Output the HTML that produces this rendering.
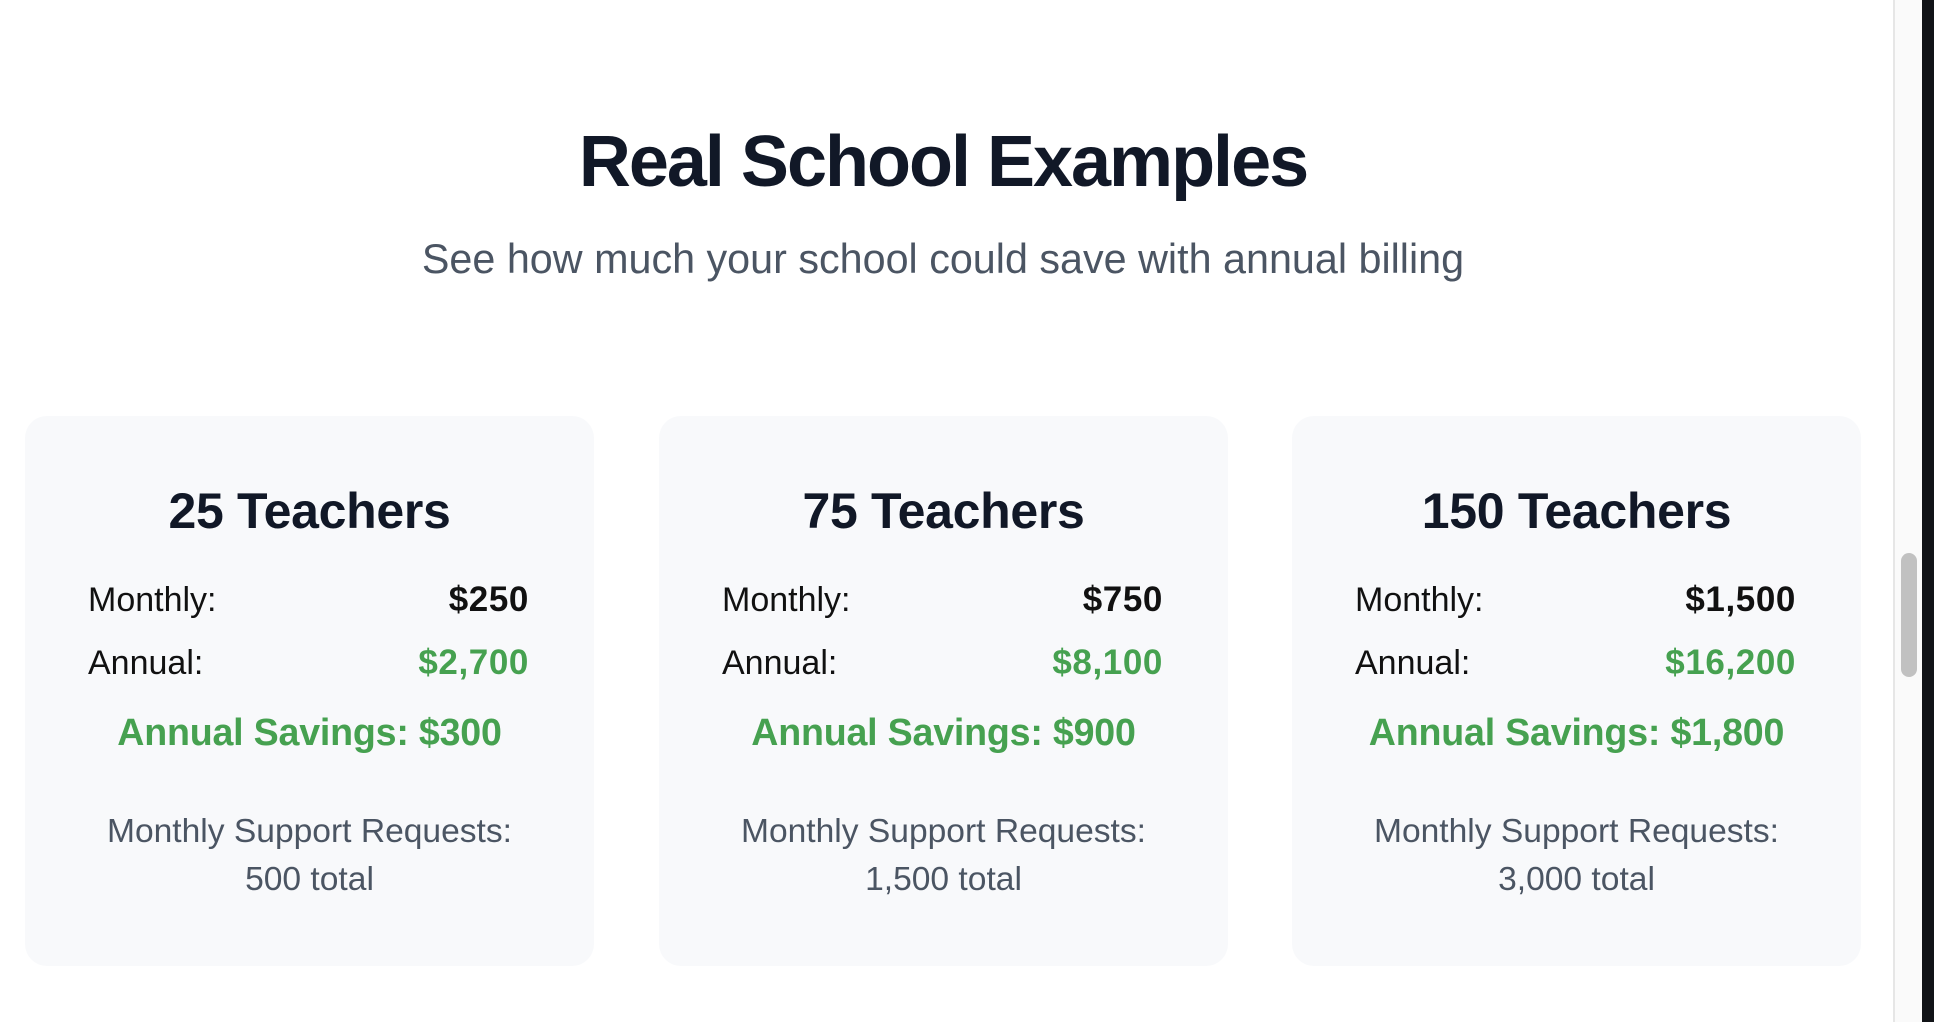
<!DOCTYPE html>
<html><head><meta charset="utf-8">
<style>
*{margin:0;padding:0;box-sizing:border-box}
html,body{width:1934px;height:1022px;overflow:hidden;background:#fff;font-family:"Liberation Sans",sans-serif}
.a{position:absolute;white-space:nowrap}
.t{left:0;width:1886px;text-align:center;}
.card{position:absolute;top:416px;width:569px;height:550px;background:#f8f9fb;border-radius:22px}
.card .h{position:absolute;left:0;right:0;top:70px;text-align:center;font-size:50px;line-height:50px;font-weight:bold;color:#111827;letter-spacing:-0.3px}
.row{position:absolute;left:63px;right:65px;font-size:34px;line-height:34px;color:#111;display:flex;justify-content:space-between}
.row b{font-size:35px;letter-spacing:0.6px}
.r1{top:167px}.r2{top:230px}
.g{color:#46a150}
.sv{position:absolute;left:0;right:0;top:297px;text-align:center;font-size:37.6px;line-height:38px;font-weight:bold;color:#46a150;letter-spacing:-0.2px}
.sp{position:absolute;left:0;right:0;top:392px;text-align:center;font-size:33.6px;line-height:48px;color:#4b5563}
</style></head><body>
<div class="a t" style="top:126px;font-size:72px;line-height:72px;font-weight:bold;color:#111827;letter-spacing:-2px">Real School Examples</div>
<div class="a t" style="top:239px;font-size:41.3px;line-height:41px;color:#4b5563">See how much your school could save with annual billing</div>

<div class="card" style="left:25px">
<div class="h">25 Teachers</div>
<div class="row r1"><span>Monthly:</span><b>$250</b></div>
<div class="row r2"><span>Annual:</span><b class="g">$2,700</b></div>
<div class="sv">Annual Savings: $300</div>
<div class="sp">Monthly Support Requests:<br>500 total</div>
</div>
<div class="card" style="left:659px">
<div class="h">75 Teachers</div>
<div class="row r1"><span>Monthly:</span><b>$750</b></div>
<div class="row r2"><span>Annual:</span><b class="g">$8,100</b></div>
<div class="sv">Annual Savings: $900</div>
<div class="sp">Monthly Support Requests:<br>1,500 total</div>
</div>
<div class="card" style="left:1292px">
<div class="h">150 Teachers</div>
<div class="row r1"><span>Monthly:</span><b>$1,500</b></div>
<div class="row r2"><span>Annual:</span><b class="g">$16,200</b></div>
<div class="sv">Annual Savings: $1,800</div>
<div class="sp">Monthly Support Requests:<br>3,000 total</div>
</div>

<div class="a" style="left:1893px;top:0;width:29px;height:1022px;background:#fafafa;border-left:2px solid #e6e6e6"></div>
<div class="a" style="left:1901px;top:553px;width:16px;height:124px;background:#c1c1c1;border-radius:8px"></div>
<div class="a" style="left:1922px;top:0;width:12px;height:1022px;background:#111317"></div>
</body></html>
